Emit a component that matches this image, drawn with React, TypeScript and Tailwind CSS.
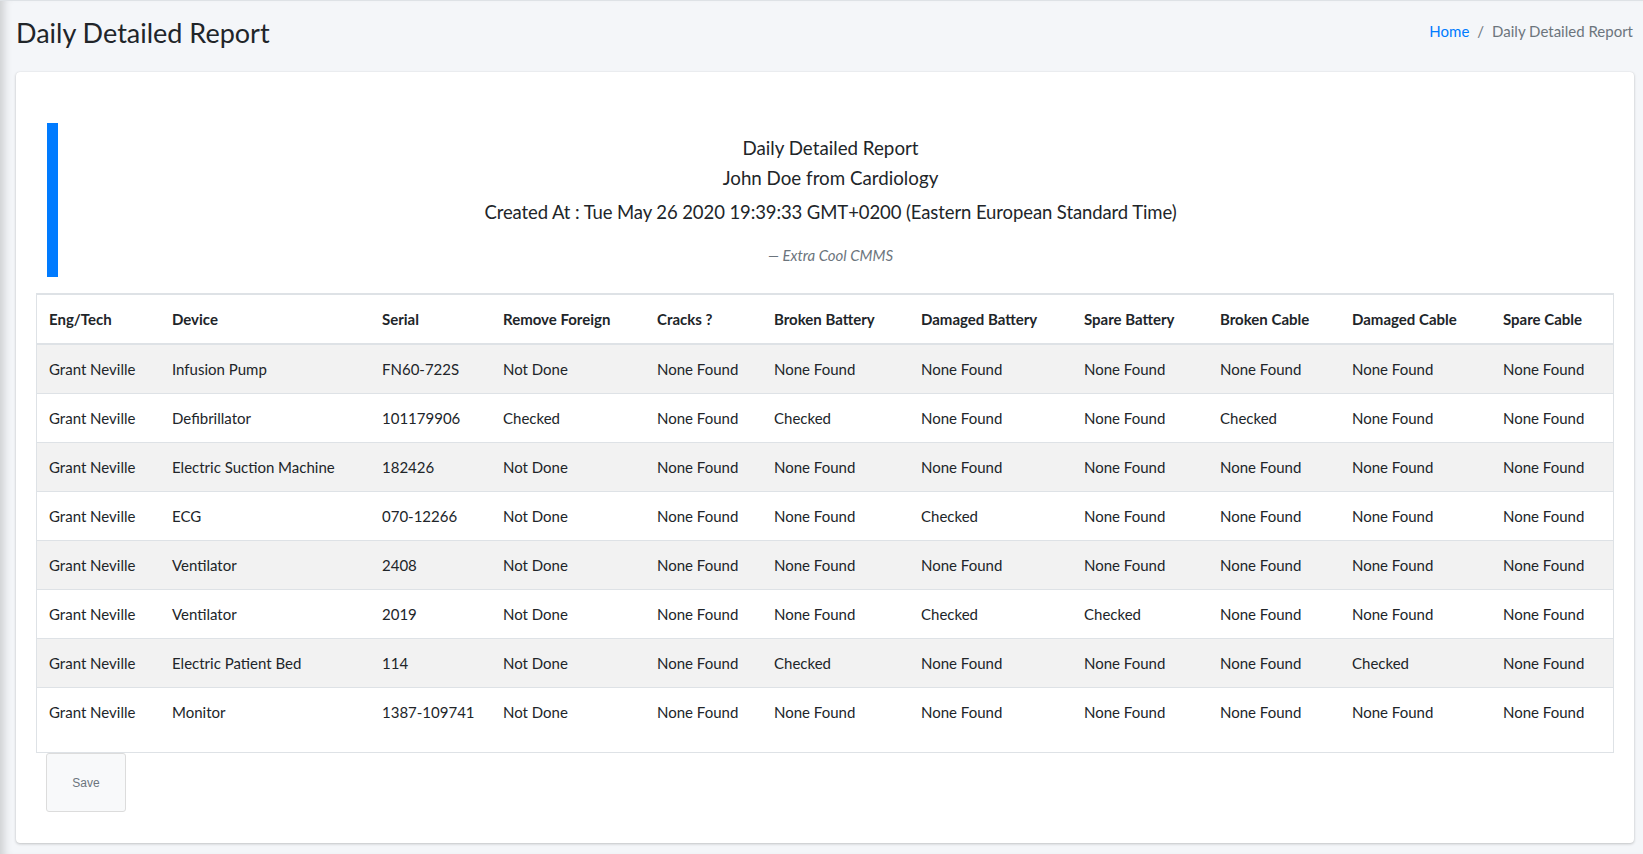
import React from "react";

const NF = "None Found";
const CK = "Checked";

const headers = [
  "Eng/Tech",
  "Device",
  "Serial",
  "Remove Foreign",
  "Cracks ?",
  "Broken Battery",
  "Damaged Battery",
  "Spare Battery",
  "Broken Cable",
  "Damaged Cable",
  "Spare Cable",
];

const rows: string[][] = [
  ["Grant Neville", "Infusion Pump", "FN60-722S", "Not Done", NF, NF, NF, NF, NF, NF, NF],
  ["Grant Neville", "Defibrillator", "101179906", "Checked", NF, CK, NF, NF, CK, NF, NF],
  ["Grant Neville", "Electric Suction Machine", "182426", "Not Done", NF, NF, NF, NF, NF, NF, NF],
  ["Grant Neville", "ECG", "070-12266", "Not Done", NF, NF, CK, NF, NF, NF, NF],
  ["Grant Neville", "Ventilator", "2408", "Not Done", NF, NF, NF, NF, NF, NF, NF],
  ["Grant Neville", "Ventilator", "2019", "Not Done", NF, NF, CK, CK, NF, NF, NF],
  ["Grant Neville", "Electric Patient Bed", "114", "Not Done", NF, CK, NF, NF, NF, CK, NF],
  ["Grant Neville", "Monitor", "1387-109741", "Not Done", NF, NF, NF, NF, NF, NF, NF],
];

export default function App() {
  return (
    <div className="h-[854px] overflow-hidden bg-[#f4f6f9] border-t border-[#dee2e6] shadow-[inset_10px_0_9px_-6px_rgba(0,0,0,0.16)] font-['Lato','Noto_Sans',sans-serif] text-[#212529]">
      {/* content header */}
      <div className="flex items-start justify-between pl-4 pr-[10px] pt-[15px]">
        <h1 className="text-[27px] leading-[34px] font-normal">Daily Detailed Report</h1>
        <nav className="mt-[3px] flex items-center text-[15px] leading-6">
          <span className="text-[#007bff]">Home</span>
          <span className="px-2 text-[#6c757d]">/</span>
          <span className="text-[#6c757d]">Daily Detailed Report</span>
        </nav>
      </div>

      {/* card */}
      <div className="mt-[22px] ml-4 mr-[9px] rounded bg-white p-5 pb-[31px] shadow-[0_0_1px_rgba(0,0,0,0.125),0_1px_3px_rgba(0,0,0,0.2)]">
        <blockquote className="mt-[31px] mb-4 mx-[11px] border-l-[11px] border-[#007bff] px-[11px] py-[10px] text-center">
          <p className="text-[18.75px] leading-[30px]">Daily Detailed Report</p>
          <p className="text-[18.75px] leading-[30px]">John Doe from Cardiology</p>
          <p className="mt-[4px] text-[18.5px] leading-[30px] tracking-[-0.1px]">
            Created At : Tue May 26 2020 19:39:33 GMT+0200 (Eastern European Standard Time)
          </p>
          <footer className="mt-4 text-[15px] leading-6 italic text-[#6c757d]">— Extra Cool CMMS</footer>
        </blockquote>

        <div className="border border-[#dee2e6] pb-[16px]">
          <table className="w-full table-fixed text-[15px] leading-6">
            <colgroup>
              <col className="w-[123px]" />
              <col className="w-[210px]" />
              <col className="w-[121px]" />
              <col className="w-[154px]" />
              <col className="w-[117px]" />
              <col className="w-[147px]" />
              <col className="w-[163px]" />
              <col className="w-[136px]" />
              <col className="w-[132px]" />
              <col className="w-[151px]" />
              <col className="w-[122px]" />
            </colgroup>
            <thead>
              <tr className="border-b-2 border-[#dee2e6]">
                {headers.map((h) => (
                  <th
                    key={h}
                    className="border-t border-[#dee2e6] px-3 pt-3 pb-3 text-left font-bold whitespace-nowrap"
                  >
                    {h}
                  </th>
                ))}
              </tr>
            </thead>
            <tbody>
              {rows.map((r, i) => (
                <tr
                  key={i}
                  className={
                    (i % 2 === 0 ? "bg-[#f2f2f2] " : "bg-white ") +
                    (i > 0 ? "border-t border-[#dee2e6]" : "")
                  }
                >
                  {r.map((c, j) => (
                    <td key={j} className="px-3 py-3 whitespace-nowrap">
                      {c}
                    </td>
                  ))}
                </tr>
              ))}
            </tbody>
          </table>
        </div>

        <button className="ml-[10px] flex h-[59px] w-[80px] items-center justify-center rounded-[3px] border border-[#dcdcdc] bg-[#f8f9fa] font-['Liberation_Sans',Arial,sans-serif] text-[12px] text-[#6c757d]">
          Save
        </button>
      </div>
    </div>
  );
}
